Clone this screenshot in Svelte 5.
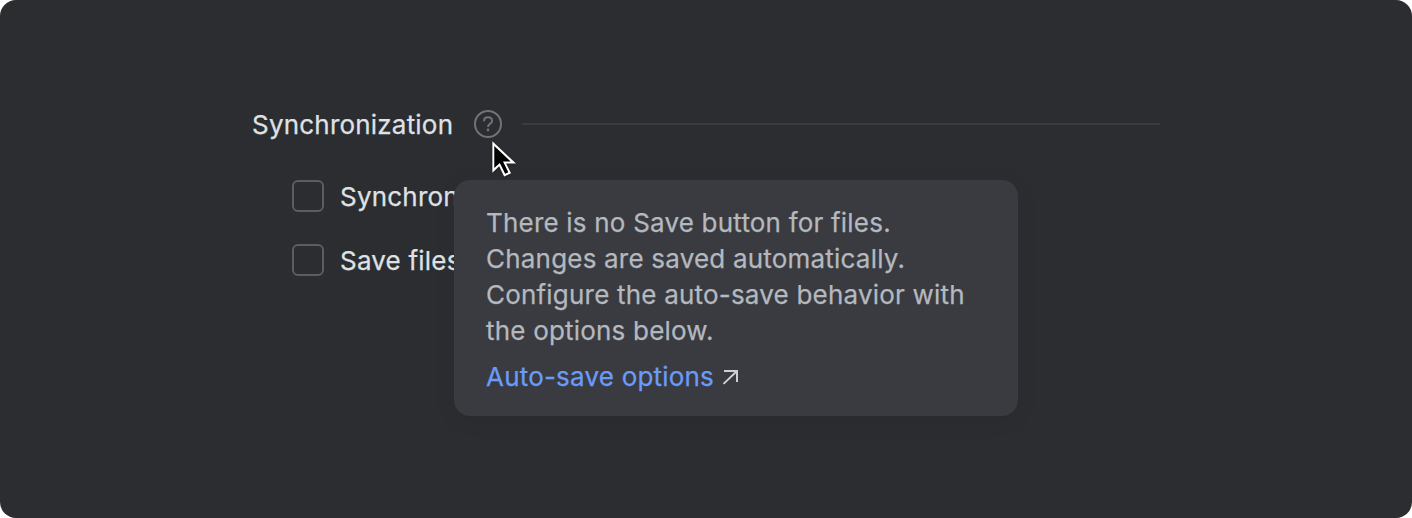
<script>
  const options = ['Synchron', 'Save files'];
  const lines = [
    'There is no Save button for files.',
    'Changes are saved automatically.',
    'Configure the auto-save behavior with',
    'the options below.'
  ];
</script>

<main class="panel">
  <header class="group">
    <h2>Synchronization</h2>
    <svg class="help" width="28" height="28" viewBox="0 0 28 28" fill="none" stroke="#6f737a" stroke-width="2">
      <circle cx="14" cy="14" r="13" />
      <path d="M10 11.2C10 8.8 11.6 7.2 14 7.2S18.1 8.8 18.1 10.9C18.1 13.7 14 13.6 14 16.9" />
      <circle cx="14" cy="20" r="1.4" fill="#6f737a" stroke="none" />
    </svg>
    <span class="rule"></span>
  </header>
  <div class="options">
    {#each options as option}
      <div class="option"><span class="box"></span><span>{option}</span></div>
    {/each}
  </div>
  <aside class="tooltip">
    <p>
      {#each lines as line}
        <span class="line">{line}</span>
      {/each}
    </p>
    <div class="link">
      <span>Auto-save options</span>
      <svg width="18" height="18" viewBox="0 0 18 18" fill="none" stroke="#ced0d6" stroke-width="2">
        <path d="M3 3H16V14M15.5 3.5L2.5 15.9" />
      </svg>
    </div>
  </aside>
  <svg class="cursor" width="34" height="45" viewBox="0 0 32 42.35">
    <path d="M6 5V34.5L12.4 28.4L17.1 38.2L23.6 35.1L18.9 25.9H28.2Z" fill="#fff" />
    <path d="M7.8 9.4V30.2L13 25.3L18 35.6L21 34.1L16 24H23.2Z" fill="#000" />
  </svg>
</main>

<style>
  .panel {
    position: relative;
    box-sizing: border-box;
    width: 1412px;
    height: 518px;
    padding: 106px 252px 0;
    border-radius: 16px;
    overflow: hidden;
    background: #2b2d30;
    color: #dfe1e5;
    font: 400 26px/36px Inter, sans-serif;
    letter-spacing: 0.2px;
    -webkit-text-stroke: 0.25px currentColor;
  }
  .group {
    display: flex;
    align-items: center;
    height: 36px;
  }
  h2 {
    width: 222px;
    margin: 2px 0 0;
    font: inherit;
    white-space: nowrap;
  }
  .help {
    flex: none;
  }
  .rule {
    flex: 1;
    height: 2px;
    margin-left: 20px;
    background: #393b40;
  }
  .options {
    display: flex;
    flex-direction: column;
    gap: 28px;
    padding: 36px 0 0 40px;
  }
  .option {
    display: flex;
    align-items: center;
    gap: 16px;
    height: 36px;
    white-space: nowrap;
  }
  .option span:last-child {
    padding-top: 2px;
  }
  .box {
    box-sizing: border-box;
    width: 32px;
    height: 32px;
    border: 2px solid #5a5d63;
    border-radius: 6px;
  }
  .tooltip {
    position: absolute;
    left: 454px;
    top: 180px;
    box-sizing: border-box;
    width: 564px;
    height: 236px;
    padding: 25px 32px;
    border-radius: 16px;
    background: #393b40;
    box-shadow: 0 4px 24px rgba(0, 0, 0, 0.06);
    color: #b4b8bf;
    white-space: nowrap;
  }
  p {
    margin: 0;
  }
  .line {
    display: block;
  }
  .link {
    display: flex;
    align-items: center;
    gap: 7px;
    margin-top: 10px;
    color: #6b9bfa;
  }
  .cursor {
    position: absolute;
    left: 485.5px;
    top: 136px;
    filter: drop-shadow(0 1px 1px rgba(0, 0, 0, 0.3));
  }
</style>
